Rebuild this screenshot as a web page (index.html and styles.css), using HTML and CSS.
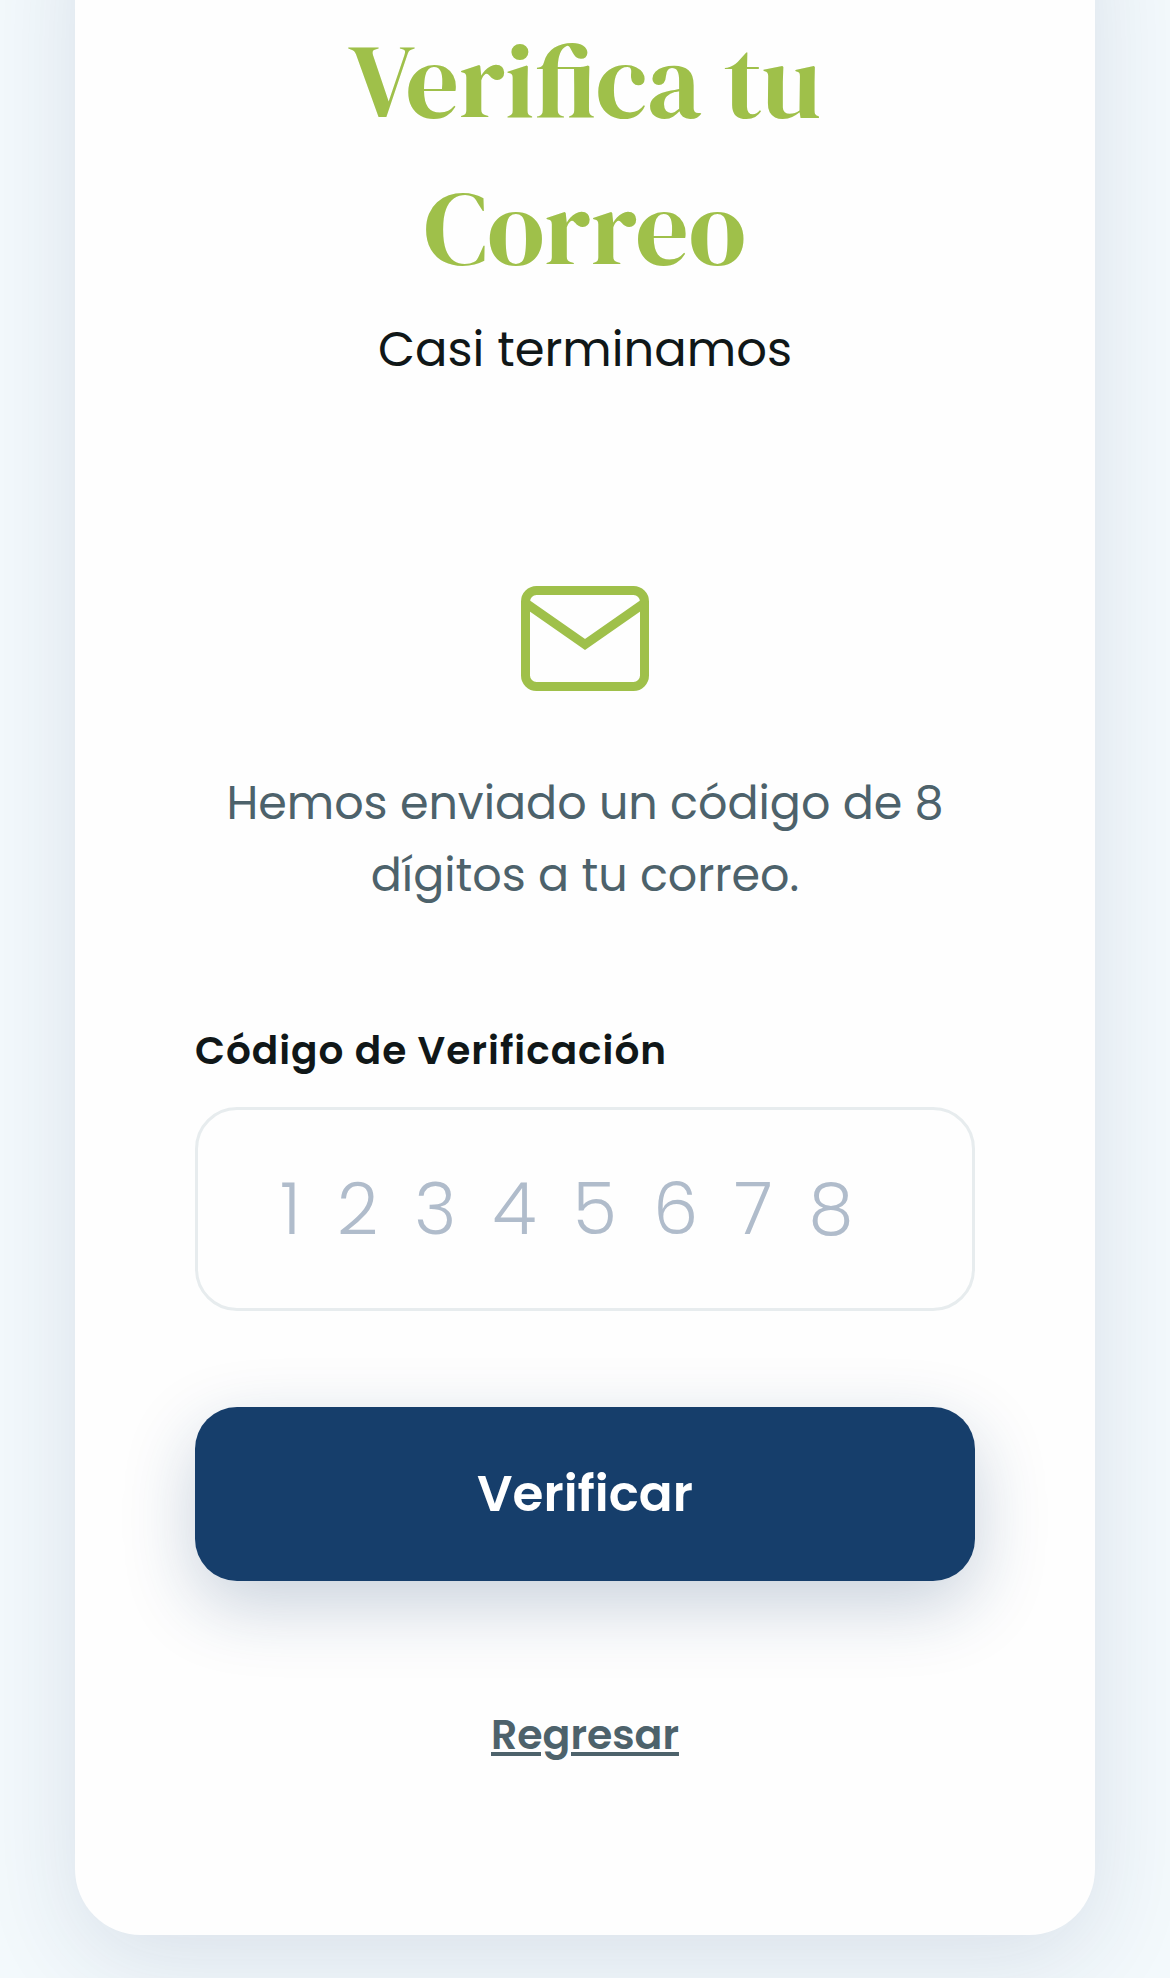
FILE: index.html
```
<!DOCTYPE html>
<html lang="es">
<head>
  <meta charset="utf-8">
  <title>Verifica tu Correo</title>
  <link rel="stylesheet" href="styles.css">
</head>
<body>
<main class="verify-card">
  <div class="verify-header">
    <h1>Verifica tu Correo</h1>
    <p>Casi terminamos</p>
  </div>
  <svg class="mail-icon" viewBox="0 0 128 105" fill="none" stroke="currentColor" stroke-width="9" aria-hidden="true">
    <rect x="4.5" y="4.5" width="119" height="96" rx="11"/>
    <path d="M6 18l58 40.500 58-40.500"/>
  </svg>
  <p class="message">Hemos enviado un código de 8 dígitos a tu correo.</p>
  <form class="verify-form">
    <label for="code">Código de Verificación</label>
    <input type="text" id="code" name="code" inputmode="numeric" maxlength="8" placeholder="12345678">
    <button type="submit">Verificar</button>
  </form>
  <a class="back-link" href="#">Regresar</a>
</main>
</body>
</html>
```

FILE: styles.css
```
* {
  box-sizing: border-box;
}

body {
  margin: 0;
  padding: 0 75px 43px;
  background-color: #f3f9fc;
  font-family: "Poppins", "Inter", sans-serif;
  color: #101718;
  overflow-x: hidden;
}

/* the top edge of the card sits above the fold */
.verify-card {
  display: flex;
  flex-direction: column;
  align-items: center;
  margin-top: -120px;
  padding: 127px 120px 170px;
  background: #fefefe;
  border-radius: 66px;
  box-shadow: 0 24px 96px rgba(30, 50, 100, 0.12);
}

.verify-header {
  max-width: 540px;
  text-align: center;
}
.verify-header h1 {
  margin: 0;
  color: #9fc04a;
  font-family: "DM Serif Display", "Liberation Serif", serif;
  font-size: 105px;
  font-weight: 400;
  line-height: 147px;
}
.verify-header p {
  margin: 13px 0 0;
  font-size: 48px;
  line-height: 72px;
}

.mail-icon {
  display: block;
  width: 128px;
  margin-top: 200px;
  color: #9fc04a;
}

.message {
  margin: 76px 0 0;
  color: #4d626b;
  font-size: 46px;
  line-height: 72px;
  text-align: center;
}

.verify-form {
  display: flex;
  flex-direction: column;
  align-self: stretch;
  margin-top: 110px;
}
.verify-form label {
  font-size: 39px;
  font-weight: 600;
  letter-spacing: 1px;
  line-height: 60px;
}
.verify-form input {
  width: 100%;
  height: 204px;
  margin-top: 26px;
  padding: 0 82px;
  border: 3px solid #e7ecee;
  border-radius: 42px;
  background: #fefefe;
  color: #101718;
  font-family: inherit;
  font-size: 72px;
  font-weight: 300;
  letter-spacing: 36px;
}
.verify-form input::placeholder {
  color: #b0bccb;
  opacity: 1;
}
.verify-form button {
  height: 174px;
  margin-top: 96px;
  border: 0;
  border-radius: 42px;
  background-color: #163e6b;
  color: #fff;
  font-family: inherit;
  font-size: 50px;
  font-weight: 600;
  box-shadow: 0 24px 72px rgba(22, 62, 107, 0.23);
  cursor: pointer;
}

.back-link {
  margin-top: 124px;
  color: #4d626b;
  font-size: 41px;
  font-weight: 600;
  line-height: 60px;
}
```
